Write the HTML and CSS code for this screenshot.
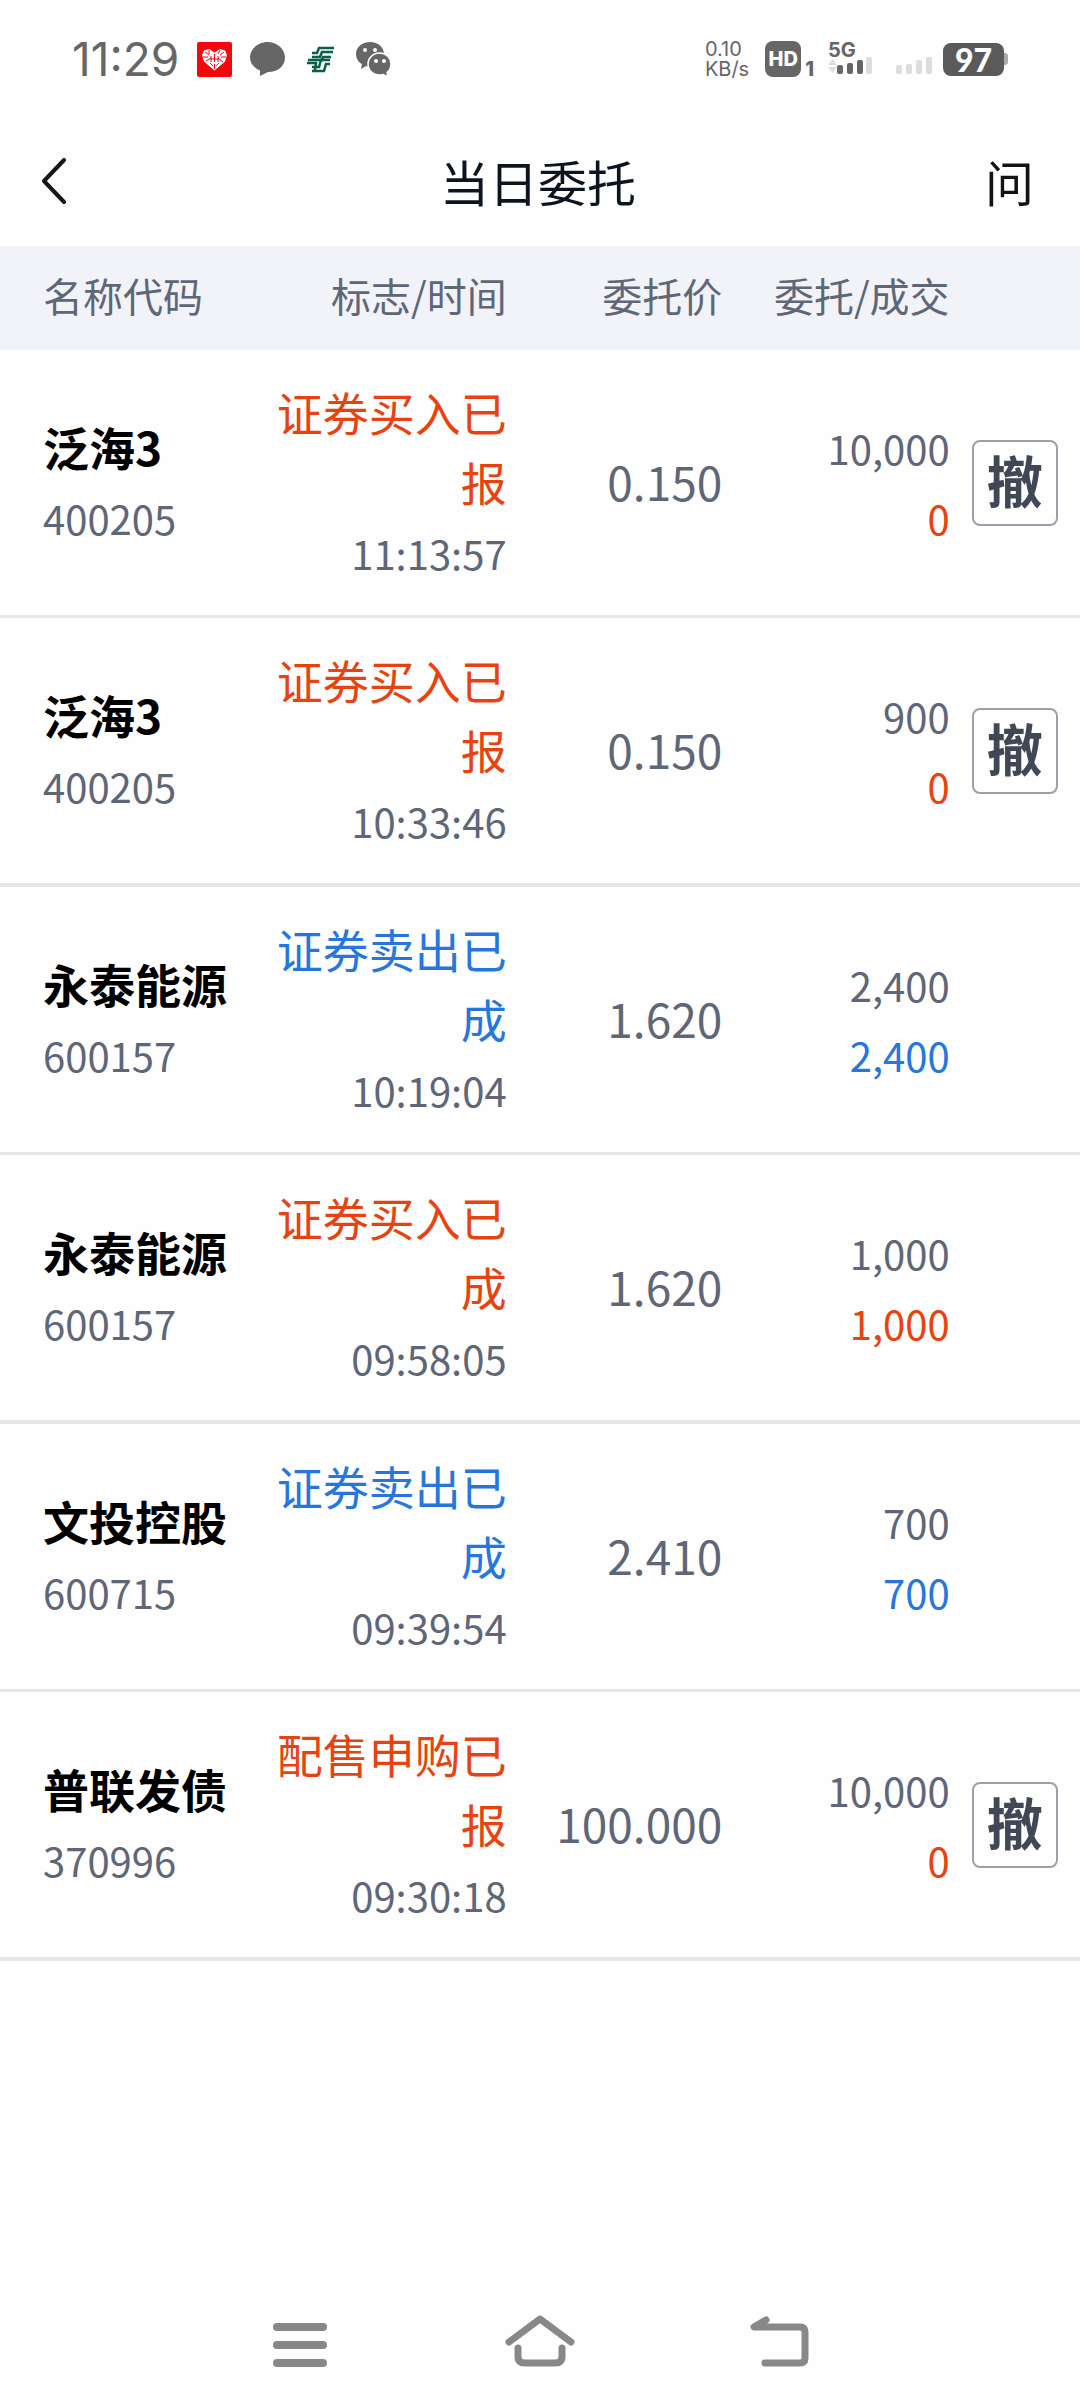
FILE: index.html
```html
<!DOCTYPE html>
<html lang="zh-CN">
<head>
  <meta charset="UTF-8" />
  <meta name="viewport" content="width=device-width,initial-scale=1.0" />
  <title>当日委托</title>
  <link rel="stylesheet" href="styles.css">
</head>
<body>

  <!-- 状态栏 -->
  <div class="status_bar">
    <div class="status_left">
      <span class="clock">11:29</span>

      <svg width="35" height="35" viewBox="0 0 35 35">
        <rect width="35" height="35" rx="2" fill="#f5050c"></rect>
        <path d="M17.500 28.500 L7 19.500 L5 13 L7 8.500 L12 7 L17.500 10.500 L23 7 L28 8.500 L30 13 L28 19.500 Z" fill="#fff"></path>
        <path d="M8 10 l4 3 M6 15 h5 M12 8 v4 M9 19 l5 -3 M14 14 v6 M17.500 12 v8 M21 14 v6 M14 17 h7 M23 8 l-2 4 M27 10 l-4 3 M29 15 h-5 M21 16 l5 4 M13 21 l3 3 M22 21 l-3 3 M17.500 22 v5"
              fill="none" stroke="#f5050c" stroke-width="1"></path>
      </svg>

      <svg width="35" height="35" viewBox="0 0 35 35">
        <path d="M17.500 0 C27 0 35 7 35 15.500 C35 24 28 30 18 30 L10 34 L10 28.500 C4 26 0 21 0 15.500 C0 7 8 0 17.500 0 Z" fill="#666"></path>
      </svg>

      <svg width="35" height="35" viewBox="0 0 35 35">
        <g fill="none" stroke="#0b5f49" stroke-width="2.500">
          <path d="M31 6 H16 L14 11 H9"></path>
          <path d="M30 10 H19 L17 15 H9"></path>
          <path d="M28 15 H20 L19 18 H5"></path>
          <path d="M4 21 H13 L12 28"></path>
          <path d="M27 18 H18 L16 25 H9"></path>
          <path d="M27 22 H23 L21 29 H9"></path>
        </g>
      </svg>

      <svg width="35" height="35" viewBox="0 0 35 35">
        <path d="M14 0 C22 0 28 5 28 12 C28 20 22 25 14 25 L10 24 L5 27 L6 22 C2 20 0 16 0 12 C0 5 6 0 14 0 Z" fill="#666"></path>
        <circle cx="9" cy="8" r="2" fill="#fff"></circle>
        <circle cx="19" cy="8" r="2" fill="#fff"></circle>
        <path d="M23.500 11 C30 11 35 16 35 22 C35 26 33 29 31 30.500 L32 35 L27 32.500 C19 35 12 29 12 22 C12 16 17 11 23.500 11 Z"
              fill="#666" stroke="#fff" stroke-width="1.500"></path>
        <circle cx="20" cy="19" r="2" fill="#fff"></circle>
        <circle cx="28" cy="19" r="2" fill="#fff"></circle>
      </svg>
    </div>

    <div class="status_right">
      <div class="net_speed">
        <span>0.10</span>
        <span>KB/s</span>
      </div>

      <div class="hd">
        <span class="hd_badge">HD</span>
        <span class="hd_index">1</span>
      </div>

      <div class="signal">
        <span class="signal_type">5G</span>
        <svg width="46" height="18" viewBox="0 0 46 18">
          <path d="M0 8 L4.500 2 L9 8 Z M0 10 L4.500 16 L9 10 Z" fill="#ddd"></path>
          <g fill="#666">
            <rect x="9" y="8" width="6" height="9" rx="2"></rect>
            <rect x="19" y="6" width="6" height="11" rx="2"></rect>
            <rect x="29" y="3" width="6" height="14" rx="2"></rect>
          </g>
          <rect x="38" y="0" width="6" height="17" rx="2" fill="#ddd"></rect>
        </svg>
      </div>

      <svg class="signal_empty" width="36" height="18" viewBox="0 0 36 18">
        <g fill="#ddd">
          <rect x="0" y="8" width="6" height="9" rx="2"></rect>
          <rect x="10" y="7" width="6" height="10" rx="2"></rect>
          <rect x="20" y="3" width="6" height="14" rx="2"></rect>
          <rect x="30" y="0" width="6" height="17" rx="2"></rect>
        </g>
      </svg>

      <div class="battery"><span class="battery_level">97</span></div>
    </div>
  </div>

  <!-- 标题栏 -->
  <header class="title_bar">
    <button class="back" type="button" aria-label="返回">
      <svg width="30" height="46" viewBox="0 0 30 46">
        <path d="M22 2 L2 23 L22 44" fill="none" stroke="#14161a" stroke-width="4" stroke-linecap="round" stroke-linejoin="round"></path>
      </svg>
    </button>
    <h1>当日委托</h1>
    <button class="ask" type="button">问</button>
  </header>

  <!-- 委托列表 -->
  <main>
    <table class="orders">
      <thead>
        <tr>
          <th class="col_name">名称代码</th>
          <th class="col_flag">标志/时间</th>
          <th class="col_price">委托价</th>
          <th class="col_amount">委托/成交</th>
          <td class="col_action"></td>
        </tr>
      </thead>
      <tbody>
        <tr>
          <td class="col_name"><strong>泛海3</strong><span>400205</span></td>
          <td class="col_flag"><em class="buy">证券买入已报</em><span>11:13:57</span></td>
          <td class="col_price">0.150</td>
          <td class="col_amount"><span>10,000</span><span class="buy">0</span></td>
          <td class="col_action"><button class="cancel" type="button">撤</button></td>
        </tr>
        <tr>
          <td class="col_name"><strong>泛海3</strong><span>400205</span></td>
          <td class="col_flag"><em class="buy">证券买入已报</em><span>10:33:46</span></td>
          <td class="col_price">0.150</td>
          <td class="col_amount"><span>900</span><span class="buy">0</span></td>
          <td class="col_action"><button class="cancel" type="button">撤</button></td>
        </tr>
        <tr>
          <td class="col_name"><strong>永泰能源</strong><span>600157</span></td>
          <td class="col_flag"><em class="sell">证券卖出已成</em><span>10:19:04</span></td>
          <td class="col_price">1.620</td>
          <td class="col_amount"><span>2,400</span><span class="sell">2,400</span></td>
          <td class="col_action"></td>
        </tr>
        <tr>
          <td class="col_name"><strong>永泰能源</strong><span>600157</span></td>
          <td class="col_flag"><em class="buy">证券买入已成</em><span>09:58:05</span></td>
          <td class="col_price">1.620</td>
          <td class="col_amount"><span>1,000</span><span class="buy">1,000</span></td>
          <td class="col_action"></td>
        </tr>
        <tr>
          <td class="col_name"><strong>文投控股</strong><span>600715</span></td>
          <td class="col_flag"><em class="sell">证券卖出已成</em><span>09:39:54</span></td>
          <td class="col_price">2.410</td>
          <td class="col_amount"><span>700</span><span class="sell">700</span></td>
          <td class="col_action"></td>
        </tr>
        <tr>
          <td class="col_name"><strong>普联发债</strong><span>370996</span></td>
          <td class="col_flag"><em class="buy">配售申购已报</em><span>09:30:18</span></td>
          <td class="col_price">100.000</td>
          <td class="col_amount"><span>10,000</span><span class="buy">0</span></td>
          <td class="col_action"><button class="cancel" type="button">撤</button></td>
        </tr>
      </tbody>
    </table>
  </main>

  <!-- 系统导航键 -->
  <nav class="nav_bar">
    <button type="button" aria-label="菜单">
      <svg width="70" height="54" viewBox="0 0 70 54">
        <path d="M12 13 H58 M12 31 H58 M12 49 H58" stroke="#888" stroke-width="8" stroke-linecap="round"></path>
      </svg>
    </button>
    <button type="button" aria-label="主页">
      <svg width="70" height="54" viewBox="0 0 70 54">
        <g fill="none" stroke="#888" stroke-width="7" stroke-linecap="round" stroke-linejoin="round">
          <path d="M4 28 L35 5 L66 28"></path>
          <path d="M13 34 V43 Q13 49 20 49 H50 Q57 49 57 43 V34"></path>
        </g>
      </svg>
    </button>
    <button type="button" aria-label="后退">
      <svg width="70" height="54" viewBox="0 0 70 54">
        <path d="M21 6 L9 13 H55 Q60 13 60 18 V44 Q60 49 55 49 H20"
              fill="none" stroke="#888" stroke-width="7" stroke-linecap="round" stroke-linejoin="round"></path>
      </svg>
    </button>
  </nav>

</body>
</html>
```

FILE: styles.css
```css
body {
  margin: 0;
  min-height: 100vh;
  display: flex;
  flex-direction: column;
  background: #fefefe;
  color: #5e6677;
  font-family: "Noto Sans CJK SC", sans-serif;
}

button {
  appearance: none;
  margin: 0;
  padding: 0;
  border: none;
  background: none;
  font-family: inherit;
  cursor: pointer;
}

svg {
  display: block;
}

main {
  flex: 1;
}

/* ========================== */
/* 状态栏 */
/* ========================== */

.status_bar {
  display: flex;
  justify-content: space-between;
  align-items: center;
  height: 118px;
  padding: 0 72px;
  color: #666;
  font-family: Inter, sans-serif;
}

.status_left, .status_right {
  display: flex;
  align-items: center;
}

.status_left {
  gap: 18px;
}

.clock {
  font-size: 46px;
  line-height: 48px;
}

.net_speed {
  display: flex;
  flex-direction: column;
  font-size: 20px;
  line-height: 20px;
  margin-right: 16px;
}

.hd {
  display: flex;
  align-items: flex-end;
  gap: 4px;
  margin-right: 14px;
  font-weight: 800;
}

.hd_badge {
  width: 36px;
  border-radius: 8px;
  background: #666;
  color: #fff;
  font-size: 20px;
  line-height: 36px;
  text-align: center;
}

.hd_index {
  font-size: 20px;
  line-height: 16px;
}

.signal {
  display: flex;
  flex-direction: column;
}

.signal_type {
  font-size: 20px;
  font-weight: 700;
  line-height: 14px;
}

.signal_empty {
  align-self: flex-end;
  margin: 0 11px 4px 22px;
}

.battery {
  display: flex;
  align-items: center;
}

.battery::after {
  content: "";
  width: 4px;
  height: 12px;
  border-radius: 0 3px 3px 0;
  background: #aaa;
}

.battery_level {
  width: 61px;
  border-radius: 8px;
  background: #5a5a5a;
  color: #fff;
  font-family: Lato, sans-serif;
  font-size: 32px;
  font-weight: 900;
  line-height: 33px;
  text-align: center;
}

/* ========================== */
/* 标题栏 */
/* ========================== */

.title_bar {
  display: grid;
  grid-template-columns: 1fr auto 1fr;
  align-items: center;
  box-sizing: border-box;
  height: 128px;
  padding: 0 46px 2px 42px;
}

.title_bar h1 {
  margin: 0;
  color: #0c1420;
  font-size: 49px;
  font-weight: 400;
  line-height: 70px;
}

.back {
  justify-self: start;
}

.ask {
  justify-self: end;
  color: #101215;
  font-size: 49px;
  font-weight: 400;
  line-height: 70px;
}

/* ========================== */
/* 委托列表 */
/* ========================== */

.orders {
  width: 100%;
  table-layout: fixed;
  border-spacing: 0;
  font-size: 40px;
  line-height: 70px;
  text-align: right;
}

.orders th, .orders td {
  padding: 0;
}

.orders thead tr {
  height: 104px;
  background: #f2f3f8;
}

.orders thead th {
  padding-bottom: 6px;
  font-weight: 400;
}

.orders tbody td {
  height: 265px;
  border-bottom: 3px solid #e4e7ea;
}

.orders tbody tr:nth-child(even) td {
  border-bottom-width: 4px;
}

.orders .col_name {
  width: 25%;
  box-sizing: border-box;
  padding-left: 43px;
  text-align: left;
}

.col_flag {
  width: 22%;
}

.col_price {
  width: 20%;
}

.col_amount {
  width: 21%;
}

.orders .col_price, .orders .col_amount {
  padding-right: 1px;
}

.col_action {
  width: 12%;
}

.orders td span, .orders td em, .orders td strong {
  display: block;
}

/* 汉字比数字略低，上移对齐 */
.orders strong, .orders em {
  margin: -2px 0 2px;
  font-size: 46px;
}

.orders strong {
  color: #000;
  font-weight: 700;
}

.orders em {
  font-style: normal;
}

.orders tbody .col_price {
  height: 262px;
  padding-bottom: 3px;
  font-size: 46px;
}

.orders .buy {
  color: #e8430f;
}

.orders .sell {
  color: #2676e0;
}

.cancel {
  display: block;
  box-sizing: border-box;
  width: 86px;
  height: 86px;
  margin-left: 21px;
  padding-bottom: 8px;
  border: 2px solid #9ba0ab;
  border-radius: 8px;
  color: #404756;
  font-size: 56px;
  font-weight: 700;
  line-height: 70px;
}

/* ========================== */
/* 系统导航键 */
/* ========================== */

.nav_bar {
  display: flex;
  justify-content: center;
  height: 134px;
}

.nav_bar button {
  display: flex;
  justify-content: center;
  align-items: center;
  width: 240px;
}
```
